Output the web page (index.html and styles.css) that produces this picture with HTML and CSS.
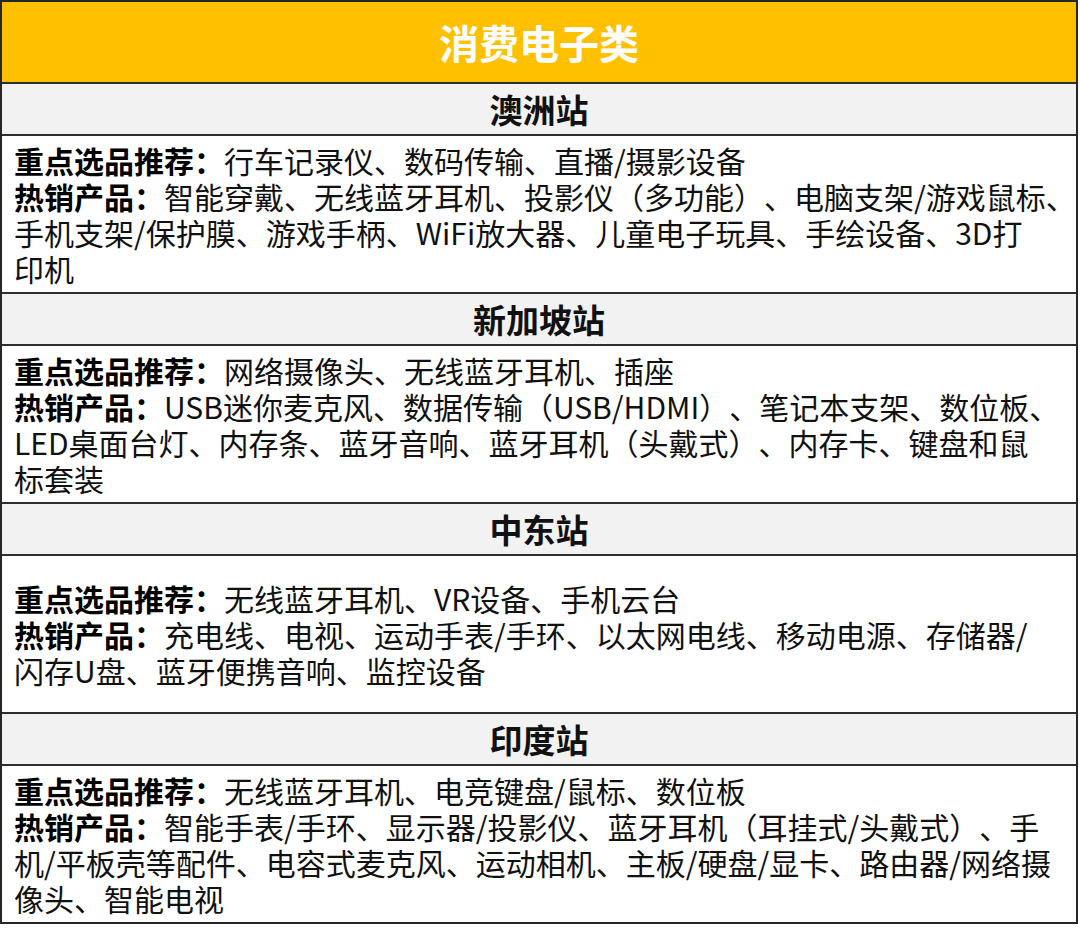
FILE: index.html
```html
<!DOCTYPE html>
<html lang="zh-CN">
<head>
<meta charset="utf-8">
<title>消费电子类</title>
<link rel="stylesheet" href="styles.css">
</head>
<body>
<div class="sheet">
  <div class="title">消费电子类</div>

  <section class="region">
    <h2 class="region-name">澳洲站</h2>
    <div class="region-body">
      <p class="lines"><b class="label">重点选品推荐：</b>行车记录仪、数码传输、直播/摄影设备<br><b class="label">热销产品：</b>智能穿戴、无线蓝牙耳机、投影仪（多功能）、电脑支架/游戏鼠标、<br>手机支架/保护膜、游戏手柄、WiFi放大器、儿童电子玩具、手绘设备、3D打<br>印机</p>
    </div>
  </section>

  <section class="region">
    <h2 class="region-name">新加坡站</h2>
    <div class="region-body">
      <p class="lines"><b class="label">重点选品推荐：</b>网络摄像头、无线蓝牙耳机、插座<br><b class="label">热销产品：</b>USB迷你麦克风、数据传输（USB/HDMI）、笔记本支架、数位板、<br>LED桌面台灯、内存条、蓝牙音响、蓝牙耳机（头戴式）、内存卡、键盘和鼠<br>标套装</p>
    </div>
  </section>

  <section class="region">
    <h2 class="region-name">中东站</h2>
    <div class="region-body">
      <p class="lines"><b class="label">重点选品推荐：</b>无线蓝牙耳机、VR设备、手机云台<br><b class="label">热销产品：</b>充电线、电视、运动手表/手环、以太网电线、移动电源、存储器/<br>闪存U盘、蓝牙便携音响、监控设备</p>
    </div>
  </section>

  <section class="region">
    <h2 class="region-name">印度站</h2>
    <div class="region-body">
      <p class="lines"><b class="label">重点选品推荐：</b>无线蓝牙耳机、电竞键盘/鼠标、数位板<br><b class="label">热销产品：</b>智能手表/手环、显示器/投影仪、蓝牙耳机（耳挂式/头戴式）、手<br>机/平板壳等配件、电容式麦克风、运动相机、主板/硬盘/显卡、路由器/网络摄<br>像头、智能电视</p>
    </div>
  </section>
</div>
</body>
</html>
```

FILE: styles.css
```css
* {
  box-sizing: content-box;
}

html, body {
  margin: 0;
  padding: 0;
  background: #ffffff;
}

body {
  font-family: "Noto Sans CJK SC", "Noto Sans", "Liberation Sans", sans-serif;
  color: #000000;
  text-spacing-trim: space-all;
}

.sheet {
  width: 1074px;
  border: 2px solid #262626;
}

.title {
  height: 80px;
  background: #ffc000;
  color: #ffffff;
  font-size: 40px;
  font-weight: 700;
  display: flex;
  align-items: center;
  justify-content: center;
  line-height: 1;
}

.region-name {
  margin: 0;
  height: 50px;
  border-top: 2px solid #2e2e2e;
  background: #f2f2f2;
  font-size: 33px;
  font-weight: 700;
  display: flex;
  align-items: center;
  justify-content: center;
  line-height: 1;
  color: #111111;
}

.region-body {
  height: 156px;
  border-top: 2px solid #2e2e2e;
  background: #ffffff;
  display: flex;
  align-items: center;
  padding: 0 0 0 12px;
}

.lines {
  margin: 0;
  font-size: 30px;
  line-height: 36px;
  white-space: nowrap;
  color: #111111;
  text-spacing-trim: space-all;
}

.label {
  font-weight: 700;
  color: #000000;
}
```
